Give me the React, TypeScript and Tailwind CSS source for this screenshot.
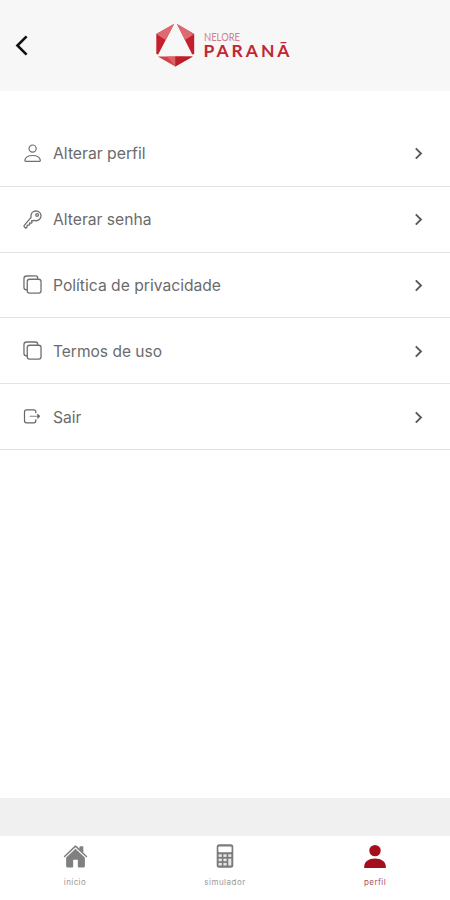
import React from "react";
import type { IconType } from "react-icons";
import { IoCopyOutline, IoHome, IoKeyOutline } from "react-icons/io5";

const Logo = () => (
  <div className="flex items-start">
    <svg width="40" height="44" viewBox="0 0 40 44">
      <path d="M1.3 11 19 1 3.2 31.5 1.3 31Z" fill="#c3202c" />
      <path d="M1.3 11 19 1 10.5 17Z" fill="#dc6a70" />
      <path d="M39.2 11 22 1 37.2 31.5 39.2 31Z" fill="#c3202c" />
      <path d="M39.2 11 22 1 30 17Z" fill="#dc6a70" />
      <path d="M2.8 33.5h35L20.3 43.5Z" fill="#d0424b" />
      <path d="M12 33.5h17L20.3 43.5Z" fill="#dd6268" />
      <path d="M20.3 33.5h17.5L20.3 43.5Z" fill="#bd1f2a" />
    </svg>
    <svg
      width="90"
      height="44"
      viewBox="0 0 90 44"
      className="ml-2 font-['Lato',sans-serif]"
    >
      <text
        x="1"
        y="18"
        fontSize="10.5"
        textLength="36"
        lengthAdjust="spacingAndGlyphs"
        fill="#cf8088"
      >
        NELORE
      </text>
      <text x="0.5" y="33.5" fontSize="17.5" fontWeight="700" textLength="86" fill="#c32632">
        PARANÃ
      </text>
    </svg>
  </div>
);

const PersonOutline = () => (
  <svg
    width="21"
    height="21"
    viewBox="0 0 21 21"
    fill="none"
    stroke="#707070"
    strokeWidth="1.2"
  >
    <circle cx="10.6" cy="5.6" r="3.6" />
    <path d="M3.8 18.3c-.8 0-1-.6-.9-1.3.7-2.9 3.9-4.5 7.7-4.5s7 1.6 7.7 4.5c.1.7-.1 1.3-.9 1.3Z" />
  </svg>
);

const ExitOutline = () => (
  <svg
    width="21"
    height="21"
    viewBox="0 0 21 21"
    fill="none"
    stroke="#666"
    strokeWidth="1.2"
    strokeLinejoin="round"
  >
    <path d="M13.8 7.3V5.8c0-1.2-.8-2-2-2H4.5c-1.2 0-2 .8-2 2v9c0 1.2.8 2 2 2h7.3c1.2 0 2-.8 2-2v-1.5" />
    <path d="M7.7 10.3h9.7" stroke="#999" />
    <path d="m15.6 8 2.4 2.3-2.4 2.3Z" fill="#666" strokeWidth="0.6" />
  </svg>
);

const KeyIcon: IconType = () => <IoKeyOutline size={21} color="#707070" />;

const CopyIcon: IconType = () => <IoCopyOutline size={21} color="#707070" />;

const menuItems: { label: string; icon: IconType; width: string }[] = [
  { label: "Alterar perfil", icon: PersonOutline, width: "92.5" },
  { label: "Alterar senha", icon: KeyIcon, width: "98.5" },
  { label: "Política de privacidade", icon: CopyIcon, width: "168" },
  { label: "Termos de uso", icon: CopyIcon, width: "109" },
  { label: "Sair", icon: ExitOutline, width: "28.5" },
];

const Chevron = () => (
  <svg
    width="10"
    height="14"
    viewBox="0 0 10 14"
    fill="none"
    stroke="#5a5a5a"
    strokeWidth="1.9"
  >
    <path d="m1.8 2.3 5.2 5.2-5.2 5.2" />
  </svg>
);

const CalculatorIcon = () => (
  <svg width="18" height="24" viewBox="0 0 18 24">
    <rect x="0.7" y="0.3" width="16.6" height="23.4" rx="2.5" fill="#7b7b7b" />
    <rect x="2.4" y="2.6" width="13.2" height="5.6" rx="0.8" fill="#fff" />
    <g fill="#e8e8e8">
      <rect x="2.6" y="10.3" width="3.2" height="2.6" />
      <rect x="7.4" y="10.3" width="3.2" height="2.6" />
      <rect x="12.3" y="10.3" width="3" height="2.6" />
      <rect x="2.6" y="14.6" width="3.2" height="2.6" />
      <rect x="7.4" y="14.6" width="3.2" height="2.6" />
      <rect x="2.6" y="18.9" width="3.2" height="2.6" />
      <rect x="7.4" y="18.9" width="3.2" height="2.6" />
      <rect x="12.3" y="14.6" width="3" height="6.9" />
    </g>
  </svg>
);

const ProfileIcon = () => (
  <svg width="24" height="25" viewBox="0 0 24 25" fill="#a30f1c">
    <circle cx="12" cy="6.6" r="5.7" />
    <path d="M1.2 24v-1.6c0-4.8 4.6-7.9 10.8-7.9s10.8 3.1 10.8 7.9V24Z" />
  </svg>
);

const App = () => {
  return (
    <div className="flex h-[900px] w-[450px] flex-col overflow-hidden bg-white font-['Inter',sans-serif]">
      <header className="grid h-[91px] shrink-0 grid-cols-[155px_1fr] items-center bg-[#f7f7f7] pb-0.5">
        <button aria-label="Voltar" className="pl-3.5">
          <svg
            width="16"
            height="22"
            viewBox="0 0 16 22"
            fill="none"
            stroke="#111"
            strokeWidth="2.6"
          >
            <path d="M12.6 2.3 3.4 11.5l9.2 9.2" />
          </svg>
        </button>
        <Logo />
      </header>

      <main className="flex-1 pt-[30px]">
        {menuItems.map(({ label, icon: Icon, width }) => (
          <button
            key={label}
            className="flex h-[65.8px] w-full items-center border-b border-[#e3e3e3] pr-[26px] pl-[21.5px] text-left"
          >
            <Icon />
            <svg width="180" height="24" className="ml-2.5 text-base">
              <text y="18" textLength={width} lengthAdjust="spacingAndGlyphs" fill="#6b6b6b">
                {label}
              </text>
            </svg>
            <span className="ml-auto">
              <Chevron />
            </span>
          </button>
        ))}
      </main>

      <div className="h-[38px] shrink-0 bg-[#f0f0f0]" />

      <nav className="grid h-16 shrink-0 grid-cols-3 bg-white pt-2 text-[8px] leading-3">
        <div className="flex flex-col items-center gap-[7px] text-[#999]">
          <IoHome size={25} color="#808080" />
          <span className="tracking-[0.4px]">início</span>
        </div>
        <div className="flex flex-col items-center gap-2 text-[#999]">
          <CalculatorIcon />
          <span className="tracking-[0.5px]">simulador</span>
        </div>
        <div className="flex flex-col items-center gap-[7px] text-[#a45462]">
          <ProfileIcon />
          <span className="tracking-[0.4px]">perfil</span>
        </div>
      </nav>
    </div>
  );
};

export default App;
